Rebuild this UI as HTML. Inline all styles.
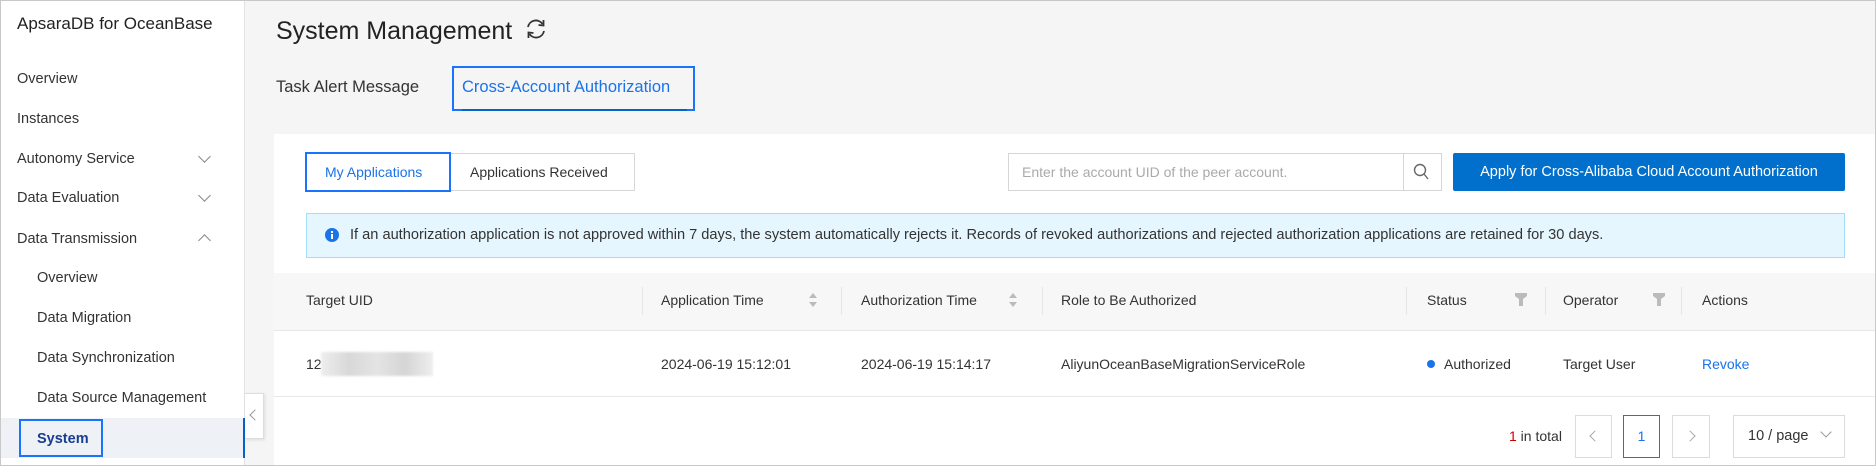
<!DOCTYPE html>
<html><head><meta charset="utf-8"><style>
*{box-sizing:border-box;margin:0;padding:0}
body{width:1876px;height:466px;overflow:hidden;font-family:"Liberation Sans",sans-serif;font-size:14px;color:#333;background:#f5f5f5;position:relative}
.a{position:absolute;white-space:nowrap}
#frame{position:absolute;left:0;top:0;width:1876px;height:466px;border:1px solid #c8c8c8;pointer-events:none}
#side{position:absolute;left:0;top:0;width:245px;height:466px;background:#fff;border-right:1px solid #e3e3e3}
.mi{position:absolute;left:17px;font-size:14.5px;color:#333;transform:translateY(-50%)}
.sub{left:37px}
.chev{position:absolute;left:200px;width:9px;height:9px;border-right:1.5px solid #888;border-bottom:1.5px solid #888}
.hd{position:absolute;top:300px;transform:translateY(-50%);font-size:14px;color:#333}
.dv{position:absolute;top:287px;width:1px;height:28px;background:#e6e6e6}
.cell{position:absolute;top:364px;transform:translateY(-50%);font-size:14px;color:#333}
.pg{position:absolute;top:415px;height:43px;border:1px solid #dcdcdc;background:#fff}
</style></head><body>
<div id="side">
  <div class="a" style="left:17px;top:14px;font-size:17px;color:#222">ApsaraDB for OceanBase</div>
  <div class="mi" style="top:79px">Overview</div>
  <div class="mi" style="top:119px">Instances</div>
  <div class="mi" style="top:159px">Autonomy Service</div>
  <div class="chev" style="top:152px;transform:rotate(45deg)"></div>
  <div class="mi" style="top:198px">Data Evaluation</div>
  <div class="chev" style="top:191px;transform:rotate(45deg)"></div>
  <div class="mi" style="top:239px">Data Transmission</div>
  <div class="chev" style="top:236px;transform:rotate(225deg)"></div>
  <div class="mi sub" style="top:278px">Overview</div>
  <div class="mi sub" style="top:318px">Data Migration</div>
  <div class="mi sub" style="top:358px">Data Synchronization</div>
  <div class="mi sub" style="top:398px">Data Source Management</div>
  <div style="position:absolute;left:0;top:418px;width:245px;height:40px;background:#eef1f6;border-right:2px solid #0064c8"></div>
  <div style="position:absolute;left:19px;top:419px;width:84px;height:38px;border:2px solid #1a73ff"></div>
  <div class="mi" style="left:37px;top:439px;font-weight:bold;color:#1a3d8f">System</div>
</div>
<div style="position:absolute;left:245px;top:393px;width:19px;height:46px;background:#fff;border:1px solid #ddd;border-left:none;box-shadow:1px 1px 3px rgba(0,0,0,.1)"></div>
<div style="position:absolute;left:251px;top:411px;width:8px;height:8px;border-left:1.5px solid #999;border-bottom:1.5px solid #999;transform:rotate(45deg)"></div>

<div class="a" style="left:276px;top:17px;font-size:25px;color:#222">System Management</div>
<svg class="a" style="left:524px;top:18px" width="24" height="22" viewBox="0 0 24 22"><path d="M4 9 A8 8 0 0 1 18.5 6" fill="none" stroke="#333" stroke-width="1.8"/><path d="M20 13 A8 8 0 0 1 5.5 16" fill="none" stroke="#333" stroke-width="1.8"/><path d="M19.5 2 L19.5 7.5 L14.5 7" fill="none" stroke="#333" stroke-width="1.8"/><path d="M4.5 20 L4.5 14.5 L9.5 15" fill="none" stroke="#333" stroke-width="1.8"/></svg>

<div class="a" style="left:276px;top:78px;font-size:16.5px;color:#333">Task Alert Message</div>
<div style="position:absolute;left:452px;top:66px;width:243px;height:45px;border:2px solid #1a73ff"></div>
<div style="position:absolute;left:462px;top:109px;width:225px;height:2px;background:#0064c8"></div>
<div class="a" style="left:462px;top:78px;font-size:16.5px;color:#1a73e8">Cross-Account Authorization</div>

<div style="position:absolute;left:274px;top:134px;width:1601px;height:332px;background:#fff"></div>
<div style="position:absolute;left:305px;top:153px;width:330px;height:38px;border:1px solid #d6d6d6;background:#fff"></div>
<div style="position:absolute;left:305px;top:152px;width:146px;height:40px;border:2px solid #1a73ff"></div>
<div class="a" style="left:325px;top:164px;color:#1a73e8;font-size:14px">My Applications</div>
<div class="a" style="left:470px;top:164px;color:#333;font-size:14px">Applications Received</div>

<div style="position:absolute;left:1008px;top:153px;width:434px;height:38px;border:1px solid #d6d6d6"></div>
<div style="position:absolute;left:1403px;top:153px;width:1px;height:38px;background:#d6d6d6"></div>
<div class="a" style="left:1022px;top:164px;color:#aaa;font-size:14px">Enter the account UID of the peer account.</div>
<svg class="a" style="left:1412px;top:162px" width="18" height="20" viewBox="0 0 18 20"><circle cx="8" cy="8" r="5.5" fill="none" stroke="#666" stroke-width="1.4"/><path d="M12 12 L16 17" stroke="#666" stroke-width="1.4"/></svg>
<div style="position:absolute;left:1453px;top:153px;width:392px;height:38px;background:#0070cc;border-radius:2px"></div>
<div class="a" style="left:1453px;width:392px;text-align:center;top:164px;color:#fff;font-size:14.5px">Apply for Cross-Alibaba Cloud Account Authorization</div>

<div style="position:absolute;left:306px;top:213px;width:1539px;height:45px;background:#e6f6fe;border:1px solid #a6dcf9"></div>
<svg class="a" style="left:325px;top:228px" width="14" height="14"><circle cx="7" cy="7" r="7" fill="#1a73e8"/><rect x="6" y="6" width="2" height="5" fill="#fff"/><rect x="6" y="3" width="2" height="2" fill="#fff"/></svg>
<div class="a" style="left:350px;top:227px;font-size:14.6px;color:#333">If an authorization application is not approved within 7 days, the system automatically rejects it. Records of revoked authorizations and rejected authorization applications are retained for 30 days.</div>

<div style="position:absolute;left:274px;top:273px;width:1601px;height:58px;background:#f7f7f7;border-bottom:1px solid #e8e8e8"></div>
<div class="hd" style="left:306px">Target UID</div>
<div class="dv" style="left:642px"></div><div class="hd" style="left:661px">Application Time</div>
<svg class="a" style="left:808px;top:292px" width="10" height="16"><path d="M1 6 L5 1 L9 6Z M1 10 L5 15 L9 10Z" fill="#bbb"/></svg>
<div class="dv" style="left:841px"></div><div class="hd" style="left:861px">Authorization Time</div>
<svg class="a" style="left:1008px;top:292px" width="10" height="16"><path d="M1 6 L5 1 L9 6Z M1 10 L5 15 L9 10Z" fill="#bbb"/></svg>
<div class="dv" style="left:1042px"></div><div class="hd" style="left:1061px">Role to Be Authorized</div>
<div class="dv" style="left:1406px"></div><div class="hd" style="left:1427px">Status</div>
<svg class="a" style="left:1515px;top:293px" width="12" height="14"><path d="M0 0 H12 V3 L8 6 V13 H4 V6 L0 3Z" fill="#bbb"/></svg>
<div class="dv" style="left:1545px"></div><div class="hd" style="left:1563px">Operator</div>
<svg class="a" style="left:1653px;top:293px" width="12" height="14"><path d="M0 0 H12 V3 L8 6 V13 H4 V6 L0 3Z" fill="#bbb"/></svg>
<div class="dv" style="left:1681px"></div><div class="hd" style="left:1702px">Actions</div>

<div style="position:absolute;left:274px;top:396px;width:1601px;height:1px;background:#e8e8e8"></div>
<div class="cell" style="left:306px">12</div>
<div style="position:absolute;left:321px;top:352px;width:112px;height:24px;background:linear-gradient(90deg,#eee,#d8d8d8,#e4e4e4,#d5d5d5,#eee);filter:blur(1px)"></div>
<div class="cell" style="left:661px">2024-06-19 15:12:01</div>
<div class="cell" style="left:861px">2024-06-19 15:14:17</div>
<div class="cell" style="left:1061px">AliyunOceanBaseMigrationServiceRole</div>
<div style="position:absolute;left:1427px;top:360px;width:8px;height:8px;border-radius:50%;background:#1a73e8"></div>
<div class="cell" style="left:1444px">Authorized</div>
<div class="cell" style="left:1563px">Target User</div>
<div class="cell" style="left:1702px;color:#1a73e8">Revoke</div>

<div class="a" style="left:1509px;top:428px;font-size:14px"><span style="color:#c00">1</span> in total</div>
<div class="pg" style="left:1575px;width:37px"></div>
<div style="position:absolute;left:1591px;top:432px;width:8px;height:8px;border-left:1.3px solid #aaa;border-bottom:1.3px solid #aaa;transform:rotate(45deg)"></div>
<div class="pg" style="left:1623px;width:37px;border-color:#1a73e8"></div>
<div class="a" style="left:1623px;width:37px;text-align:center;top:428px;color:#1a73e8">1</div>
<div class="pg" style="left:1672px;width:38px"></div>
<div style="position:absolute;left:1686px;top:432px;width:8px;height:8px;border-right:1.3px solid #aaa;border-top:1.3px solid #aaa;transform:rotate(45deg)"></div>
<div class="pg" style="left:1733px;width:112px"></div>
<div class="a" style="left:1748px;top:428px;font-size:14.5px">10 / page</div>
<div style="position:absolute;left:1822px;top:428px;width:8px;height:8px;border-right:1.2px solid #999;border-bottom:1.2px solid #999;transform:rotate(45deg)"></div>
<div id="frame"></div>
</body></html>
